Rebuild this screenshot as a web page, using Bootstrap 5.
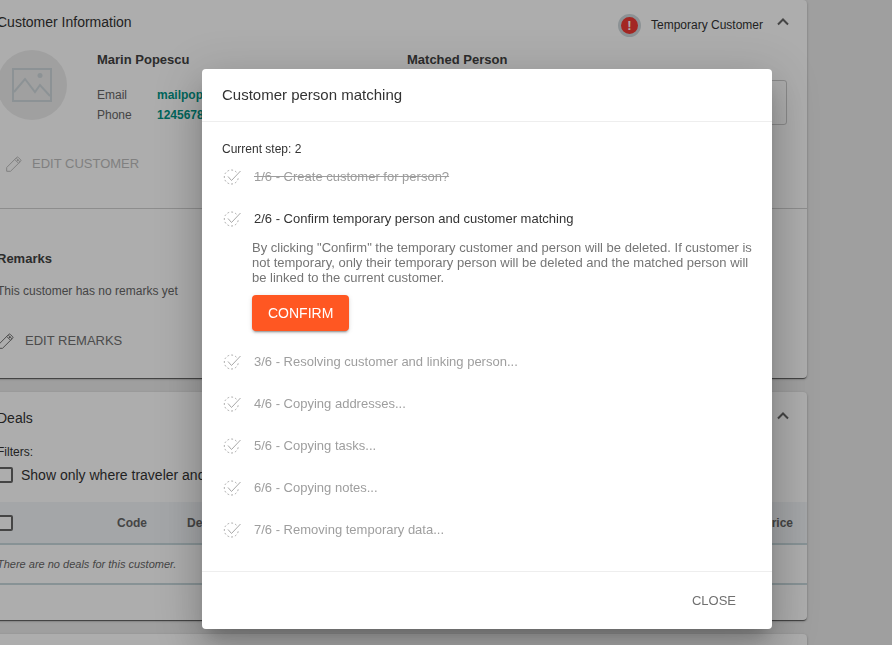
<!DOCTYPE html>
<html lang="en">
<head>
<meta charset="utf-8">
<meta name="viewport" content="width=device-width, initial-scale=1">
<title>Customer person matching</title>
<link href="https://cdn.jsdelivr.net/npm/bootstrap@5.3.0/dist/css/bootstrap.min.css" rel="stylesheet">
<style>
  body { font-family: "Liberation Sans", Arial, sans-serif; font-size: 12px; line-height: 16px; color: #333; background: #eaeaea; }
  body, .modal { overflow: hidden; }
  .page { margin-left: -23px; margin-right: 85px; }
  .panel { border: 0; border-radius: 4px; margin-bottom: 14px; color: inherit; box-shadow: 0 2px 1px -1px rgba(0,0,0,.4), 0 1px 1px rgba(0,0,0,.24), 0 1px 3px rgba(0,0,0,.2); }
  .panel-title { font-size: 14px; line-height: 20px; font-weight: 400; margin: 0; }
  .panel-head { padding: 12px 18px 0 20px; }
  .status { gap: 10px; margin-top: 2px; }
  .icon-btn { border: 0; padding: 0; margin: 4px 0 0 4px; background: none; line-height: 0; color: #666; }
  .alert-dot { width: 23px; height: 23px; border-radius: 50%; border: 3px solid #cfd8dc; background: #f03a34; color: #fff; font-weight: 700; font-size: 13px; line-height: 17px; text-align: center; }
  .status-label { padding-bottom: 2px; }
  .customer-grid { display: grid; grid-template-columns: 100px 310px 1fr; padding: 13px 20px 0; }
  .avatar { width: 70px; height: 70px; border-radius: 50%; background: #ececec; color: #cfd8dc; }
  .sub-title { font-size: 13px; line-height: 20px; font-weight: 700; margin: 0; color: #424242; }
  .facts { grid-template-columns: 60px 1fr; line-height: 20px; color: #666; margin-top: 15px; }
  .facts a { color: #009688; font-weight: 700; text-decoration: none; }
  .person-input { height: 45px; margin-top: 10px; border: 1px solid #ccc; border-radius: 3px; background: none; }
  .text-btn { border: 0; background: none; font-size: 13px; line-height: 20px; padding: 0; gap: 10px; color: #707070; }
  .text-btn:disabled { color: #bdbdbd; }
  .edit-row { padding: 29px 29px 0; }
  .remarks { padding: 40px 20px 27px; border-top: 1px solid #d0d0d0; margin-top: 34px; }
  .muted { color: #666; margin: 14px 0 16px; }
  .box-check { appearance: none; width: 16px; height: 16px; margin: 0; border: 2px solid #666; border-radius: 2px; background: #fff; flex: none; }
  .filters { padding: 0 20px; margin-top: 16px; }
  .filters label { margin-top: 5px; }
  .deals { font-size: 12px; color: #666; margin: 17px 0 0; width: 100%; }
  .deals th { height: 42px; background: #f2f5f8; border-bottom: 2px solid #c8d7dc; font-weight: 700; vertical-align: middle; padding: 0 14px 0 0; }
  .deals td { height: 40px; border-bottom: 2px solid #c8d7dc; font-style: italic; font-size: 11px; padding: 0 0 0 20px; vertical-align: middle; }
  .deals th.pick { padding-left: 20px; width: 140px; }
  .deals th.code { width: 70px; }
  .deals-foot { height: 35px; }
  .modal-backdrop { --bs-backdrop-opacity: .32; }
  .modal-dialog { max-width: 570px; margin: 69px 120px 16px auto; }
  .modal-content { border: 0; border-radius: 4px; color: #333; box-shadow: 0 11px 15px -7px rgba(0,0,0,.2), 0 24px 38px 3px rgba(0,0,0,.14), 0 9px 46px 8px rgba(0,0,0,.12); }
  .modal-header { padding: 16px 20px; border-color: #eee; }
  .modal-title { font-size: 15px; line-height: 20px; font-weight: 400; }
  .modal-body { padding: 20px 18px 20px 20px; }
  .current { line-height: 14px; margin: 0; }
  .step { height: 42px; gap: 10px; font-size: 13px; color: #9e9e9e; }
  .step svg { color: #a8a8a8; }
  .step-now { color: #333; }
  .step-done { text-decoration: line-through; }
  .detail { padding-left: 30px; padding-bottom: 10px; font-size: 13px; line-height: 15px; color: #757575; }
  .detail p { margin: 0 0 10px; }
  .confirm { height: 36px; padding: 0 16px; border: 0; border-radius: 4px; background: #ff5722; color: #fff; font-size: 14px; line-height: 20px; box-shadow: 0 3px 1px -2px rgba(0,0,0,.2), 0 2px 2px rgba(0,0,0,.14), 0 1px 5px rgba(0,0,0,.12); }
  .modal-footer { padding: 19px 36px 18px; border-color: #eee; }
  .modal-footer > * { margin: 0; }
</style>
</head>
<body>
<svg class="d-none" aria-hidden="true">
  <symbol id="i-pencil" viewBox="0 0 16 16"><path d="M.700 15.300V11.500L10.800 1.300a1 1 0 0 1 1.400 0l2.500 2.500a1 1 0 0 1 0 1.400L4.500 15.300zM8.700 3.400l3.900 3.900M10.200 2l3.900 3.900M10.800 5.200l1.600-1.600" fill="none" stroke="currentColor"/></symbol>
  <symbol id="i-up" viewBox="0 0 12 8"><path d="M1 6.500l5-5 5 5" fill="none" stroke="currentColor" stroke-width="2"/></symbol>
  <symbol id="i-step" viewBox="0 0 22 18"><path d="M14.400 4.200A7 7 0 1 0 16.300 8.500" fill="none" stroke="currentColor" stroke-dasharray="1.800 2.100"/><path d="M6 8.500l3.500 4L18.500 3" fill="none" stroke="currentColor"/></symbol>
</svg>

<main class="page">
  <section class="card panel">
    <div class="panel-head d-flex align-items-start justify-content-between">
      <h2 class="panel-title">Customer Information</h2>
      <div class="status d-flex align-items-center">
        <span class="alert-dot" role="img" aria-label="Warning">!</span>
        <span class="status-label">Temporary Customer</span>
        <button class="icon-btn align-self-start" type="button" aria-label="Collapse customer information"><svg width="12" height="8"><use href="#i-up"/></svg></button>
      </div>
    </div>
    <div class="customer-grid">
      <div class="avatar d-flex align-items-center justify-content-center">
        <svg width="40" height="34" viewBox="0 0 40 34" fill="none" stroke="currentColor" stroke-width="2" aria-hidden="true"><path d="M1 1h38v32H1zM2 24l11-13 10 13 5-7 10 11"/><circle cx="28" cy="7.500" r="2.500" fill="currentColor" stroke="none"/></svg>
      </div>
      <div>
        <h3 class="sub-title">Marin Popescu</h3>
        <div class="facts d-grid">
          <span>Email</span><a href="#mail">mailpop</a>
          <span>Phone</span><a href="#phone">1245678</a>
        </div>
      </div>
      <div>
        <label class="sub-title d-block" for="person">Matched Person</label>
        <input class="person-input w-100" id="person" type="text">
      </div>
    </div>
    <div class="edit-row">
      <button class="text-btn d-flex align-items-center" type="button" disabled><svg width="16" height="16"><use href="#i-pencil"/></svg>EDIT CUSTOMER</button>
    </div>
    <div class="remarks">
      <h3 class="sub-title">Remarks</h3>
      <p class="muted">This customer has no remarks yet</p>
      <button class="text-btn d-flex align-items-center mt-3 pt-3" type="button"><svg width="18" height="16"><use href="#i-pencil"/></svg>EDIT REMARKS</button>
    </div>
  </section>

  <section class="card panel">
    <div class="panel-head d-flex align-items-start justify-content-between pt-3">
      <h2 class="panel-title">Deals</h2>
      <button class="icon-btn" type="button" aria-label="Collapse deals"><svg width="12" height="8"><use href="#i-up"/></svg></button>
    </div>
    <div class="filters">
      <div>Filters:</div>
      <label class="panel-title d-flex align-items-center gap-2"><input class="box-check" type="checkbox">Show only where traveler and</label>
    </div>
    <table class="deals">
      <thead><tr><th class="pick"><input class="box-check d-block" type="checkbox" aria-label="Select all deals"></th><th class="code">Code</th><th>Description</th><th class="text-end">Price</th></tr></thead>
      <tbody><tr><td colspan="4">There are no deals for this customer.</td></tr></tbody>
    </table>
    <div class="deals-foot"></div>
  </section>

  <section class="card panel p-4"></section>
</main>

<div class="modal-backdrop show"></div>
<div class="modal d-block" role="dialog" aria-modal="true" aria-labelledby="dlg-title">
  <div class="modal-dialog">
    <div class="modal-content">
      <div class="modal-header"><h1 class="modal-title" id="dlg-title">Customer person matching</h1></div>
      <div class="modal-body">
        <p class="current">Current step: 2</p>
        <div class="step d-flex align-items-center"><svg width="22" height="18"><use href="#i-step"/></svg><span class="step-done">1/6 - Create customer for person?</span></div>
        <div class="step d-flex align-items-center"><svg width="22" height="18"><use href="#i-step"/></svg><span class="step-now">2/6 - Confirm temporary person and customer matching</span></div>
        <div class="detail">
          <p>By clicking "Confirm" the temporary customer and person will be deleted. If customer is not temporary, only their temporary person will be deleted and the matched person will be linked to the current customer.</p>
          <button class="confirm d-block" type="button">CONFIRM</button>
        </div>
        <div class="step d-flex align-items-center"><svg width="22" height="18"><use href="#i-step"/></svg><span>3/6 - Resolving customer and linking person...</span></div>
        <div class="step d-flex align-items-center"><svg width="22" height="18"><use href="#i-step"/></svg><span>4/6 - Copying addresses...</span></div>
        <div class="step d-flex align-items-center"><svg width="22" height="18"><use href="#i-step"/></svg><span>5/6 - Copying tasks...</span></div>
        <div class="step d-flex align-items-center"><svg width="22" height="18"><use href="#i-step"/></svg><span>6/6 - Copying notes...</span></div>
        <div class="step d-flex align-items-center"><svg width="22" height="18"><use href="#i-step"/></svg><span>7/6 - Removing temporary data...</span></div>
      </div>
      <div class="modal-footer"><button class="text-btn" type="button">CLOSE</button></div>
    </div>
  </div>
</div>
<script src="https://cdn.jsdelivr.net/npm/bootstrap@5.3.0/dist/js/bootstrap.bundle.min.js"></script>
</body>
</html>
